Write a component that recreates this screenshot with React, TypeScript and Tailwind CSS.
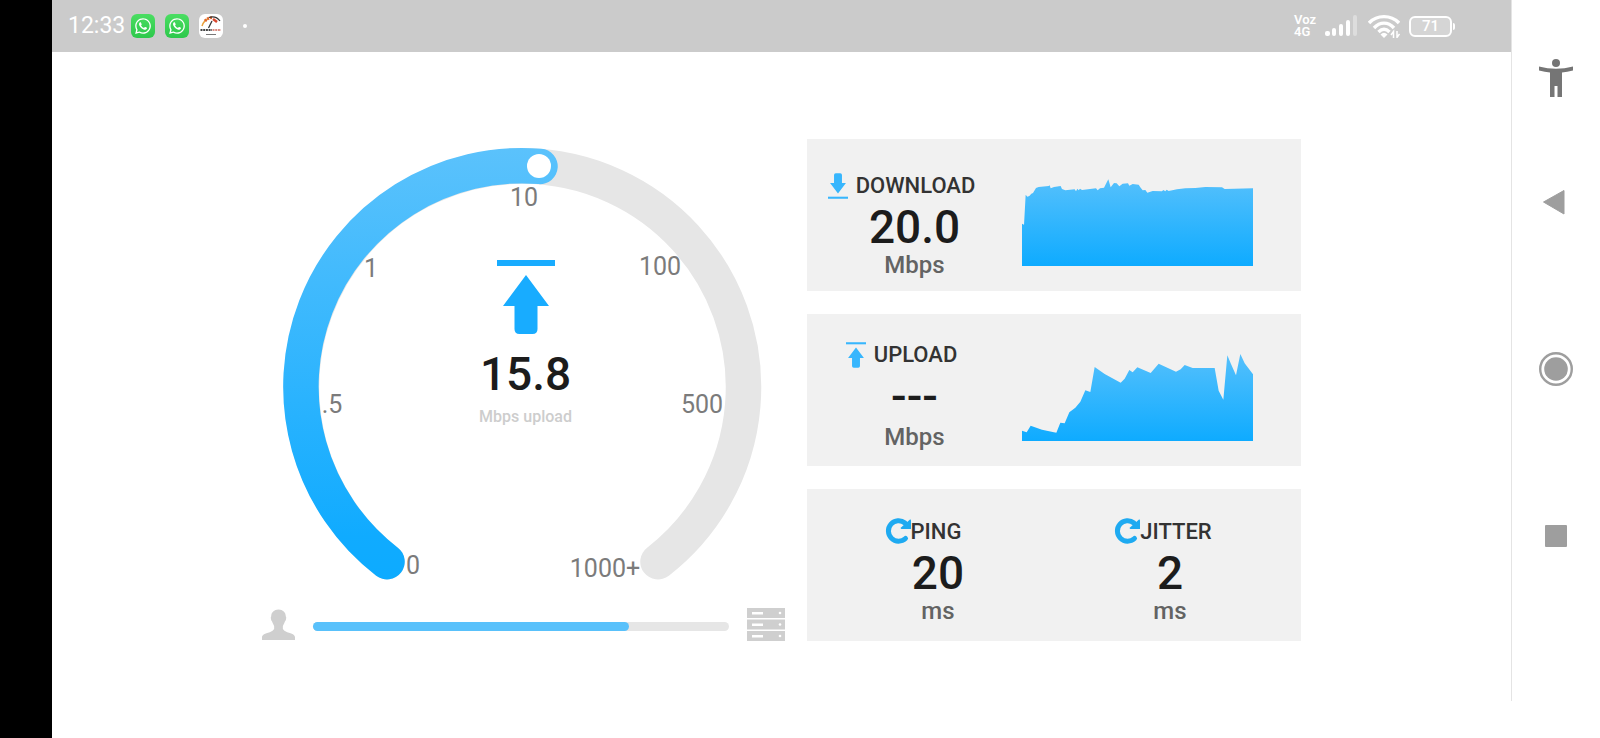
import type { ReactNode } from "react";
import { FaWhatsapp } from "react-icons/fa";

const DOWNLOAD_POINTS =
  "0,136 3,134 6,139 11,47 16,53 22,51 28,44 33,42 42,27 50,24 80,21 83,19 86,28 96,24 116,21 120,30 130,34 158,31 162,37 166,29 170,34 174,29 180,33 222,28 227,34 234,28 246,26 252,14 259,1 266,25 276,12 284,13 292,22 302,14 318,13 322,20 332,15 350,17 356,26 362,34 370,33 376,41 392,36 420,37 424,33 430,37 434,32 440,36 465,31 490,28 520,27 550,24 600,25 608,30 693,28";

const UPLOAD_POINTS =
  "0,230 14,235 26,215 60,227 103,236 115,206 128,208 142,175 160,161 175,143 190,109 205,114 218,39 248,60 296,86 308,74 322,48 332,55 346,40 386,57 410,29 462,53 476,46 488,33 512,42 578,42 590,110 604,137 616,4 626,28 642,64 655,0 668,28 693,61";

const TICKS = [
  { label: "0", x: 151, y: 435 },
  { label: ".5", x: 70, y: 274 },
  { label: "1", x: 109, y: 138 },
  { label: "10", x: 262, y: 67 },
  { label: "100", x: 398, y: 136 },
  { label: "500", x: 440, y: 274 },
  { label: "1000+", x: 343, y: 438 },
];

function SignalIcon() {
  return (
    <svg viewBox="0 0 34 22" className="h-[22px] w-[34px]" fill="#fff">
      <rect x="0" y="16" width="5" height="5" rx="2" />
      <rect x="7" y="13" width="4" height="8" rx="2" />
      <rect x="14" y="9" width="4" height="12" rx="2" />
      <rect x="21" y="5" width="4" height="16" rx="2" />
      <rect x="28" y="0" width="4" height="21" rx="2" opacity="0.35" />
    </svg>
  );
}

function WifiIcon() {
  return (
    <svg viewBox="0 0 32 24" className="h-6 w-8" fill="none" stroke="#fff" strokeWidth="3.400">
      <path d="M1 9 C9 0.500 23 0.500 31 9" />
      <path d="M6 14 C12 7.500 20 7.500 26 14" />
      <path d="M10.500 18 C14 14.500 18 14.500 21.500 18" />
      <path d="M12.500 20.500 Q16 17 19.500 20.500 L16 24 Z" fill="#fff" stroke="none" />
      <path d="M25.500 24 V17.500 L23 21 M29 17 V23.500 L31.500 20" strokeWidth="1.500" />
    </svg>
  );
}

function SpeedtestBadge() {
  return (
    <svg viewBox="0 0 24 24" className="size-6">
      <rect width="24" height="24" rx="6" fill="#fff" />
      <path d="M3 12 Q5 6 10 4.500" fill="none" stroke="#e9a13b" strokeWidth="1.500" />
      <path d="M6 7 Q9 3.500 14 3.500" fill="none" stroke="#e0662e" strokeWidth="3" strokeDasharray="2 1" />
      <path d="M10 3.500 Q17 1.500 21 7" fill="none" stroke="#333" strokeWidth="1.200" />
      <path d="M14 5 L18 8" stroke="#d9482f" strokeWidth="2.500" />
      <path d="M9.500 14 L13 7" stroke="#333" strokeWidth="1.200" />
      <path d="M1.500 16 H13" stroke="#444" strokeWidth="2" strokeDasharray="2 0.700" />
      <path d="M13.500 16 H22" stroke="#d98b80" strokeWidth="2" strokeDasharray="2 0.700" />
      <path d="M7 20.500 H17" stroke="#777" strokeWidth="1" />
    </svg>
  );
}

function StatusBar() {
  return (
    <header className="flex h-13 items-center justify-between bg-[#cbcbcb] pr-[56px] pl-4 text-white">
      <div className="flex items-center">
        <span className="mr-[6px] text-[23px]">12:33</span>
        <div className="flex items-center gap-[10px]">
          {["a", "b"].map((k) => (
            <span key={k} className="flex size-6 items-center justify-center rounded-md bg-linear-to-b from-[#4ade62] to-[#2cc84b]">
              <FaWhatsapp size={18} />
            </span>
          ))}
          <SpeedtestBadge />
        </div>
        <span className="ml-5 size-1 rounded-full bg-white" />
      </div>
      <div className="flex items-center gap-[9px]">
        <div className="text-[13px] leading-3 font-semibold">
          <div>Voz</div>
          <div>4G</div>
        </div>
        <SignalIcon />
        <WifiIcon />
        <div className="flex items-center gap-px">
          <span className="flex h-[21px] w-[43px] items-center justify-center rounded-md border-2 border-white bg-white/20 text-[15px] font-medium">
            71
          </span>
          <span className="h-[7px] w-[2px] rounded-r bg-white" />
        </div>
      </div>
    </header>
  );
}

function ArrowIcon({ dir, className, fill }: { dir: "up" | "down"; className: string; fill: string }) {
  return (
    <svg viewBox="0 0 58 74" className={className} fill={fill}>
      <g transform={dir === "down" ? "matrix(1 0 0 -1 0 74)" : undefined}>
        <rect width="58" height="6" />
        <path d="M29 15 L52 46 H40.500 V69 Q40.500 74 35.500 74 H22.500 Q17.500 74 17.500 69 V46 H6 Z" />
      </g>
    </svg>
  );
}

function RefreshIcon() {
  return (
    <svg viewBox="0 0 26 26" className="size-[26px] overflow-visible">
      <path d="M20.500 19.500 A10.200 10.200 0 1 1 20 4" fill="none" stroke="#1eaaf1" strokeWidth="5" strokeLinecap="round" />
      <path d="M25 0.500 Q26 0 26 1.500 V10 H16.500 Q15 9.500 16 8.500 Z" fill="#1eaaf1" />
    </svg>
  );
}

function Gauge() {
  return (
    <div className="grid">
      <svg viewBox="0 0 523 446" className="col-start-1 row-start-1 w-full">
        <defs>
          <linearGradient id="arc" gradientUnits="userSpaceOnUse" x1="0" y1="9" x2="0" y2="440">
            <stop offset="0" stopColor="#5bc2fc" />
            <stop offset="0.900" stopColor="#10abff" />
            <stop offset="1" stopColor="#0dabff" />
          </linearGradient>
        </defs>
        <g fill="none" strokeWidth="35.500" strokeLinecap="round">
          <path d="M125 422.700 A221 221 0 1 1 396 422.700" stroke="#e6e6e6" />
          <path d="M125 422.700 A221 221 0 0 1 278 27.400" stroke="url(#arc)" />
        </g>
        <circle cx="277" cy="27" r="12" fill="#fff" />
        <g fill="#7b7b7b" fontSize="25" textAnchor="middle">
          {TICKS.map((t) => (
            <text key={t.label} x={t.x} y={t.y}>
              {t.label}
            </text>
          ))}
        </g>
      </svg>
      <div className="col-start-1 row-start-1 flex flex-col items-center pt-[121px] pl-1">
        <ArrowIcon dir="up" className="h-[74px] w-[58px]" fill="#18acff" />
        <strong className="mt-4 text-[46px] leading-[48px] font-medium text-[#1c1c1c]">15.8</strong>
        <span className="mt-[7px] text-[16px] leading-6 font-medium text-[#cdcdcd]">Mbps upload</span>
      </div>
    </div>
  );
}

function TransferProgress({ value }: { value: number }) {
  return (
    <div className="flex items-center gap-[18px]">
      <svg viewBox="0 0 34 32" className="h-8 w-[33px]" fill="#cfcfcf">
        <path d="M17 0 C21.500 0 24.500 3 24.500 7 Q25.500 8 24.500 11 Q23.500 12 23 14 Q22 16 21.500 17 V20 Q22.500 22 26 23.500 C31 25 34 26 34 29 V31.500 H0 V29 C0 26 3 25 8 23.500 Q11.500 22 12.500 20 V17 Q12 16 11 14 Q10.500 12 9.500 11 Q8.500 8 9.500 7 C9.500 3 12.500 0 17 0 Z" />
      </svg>
      <div
        role="progressbar"
        aria-label="Upload progress"
        aria-valuenow={value}
        className="mt-1 h-[9px] flex-1 rounded-full bg-[#e6e6e6]"
      >
        <div className="h-full rounded-full bg-[#59c1fb]" style={{ width: `${value}%` }} />
      </div>
      <svg viewBox="0 0 38 33" className="h-[33px] w-[38px]">
        {[0, 11.5, 23].map((y) => (
          <g key={y}>
            <rect y={y} width="38" height="10" fill="#cfcfcf" />
            <rect x="5" y={y + 4} width="11" height="2.500" fill="#fff" />
            <circle cx="33" cy={y + 5} r="1.300" fill="#fff" />
          </g>
        ))}
      </svg>
    </div>
  );
}

function AreaChart({ id, points }: { id: string; points: string }) {
  return (
    <svg viewBox="0 0 693 261" className="h-[87px] w-[231px] shrink-0">
      <defs>
        <linearGradient id={id} x1="0" y1="0" x2="0" y2="1">
          <stop offset="0" stopColor="#55c0fc" />
          <stop offset="1" stopColor="#0eabff" />
        </linearGradient>
      </defs>
      <polygon points={`${points} 693,261 0,261`} fill={`url(#${id})`} />
    </svg>
  );
}

function Card({ children }: { children: ReactNode }) {
  return <section className="flex h-[152px] items-start bg-[#f1f1f1]">{children}</section>;
}

function Title({ icon, children }: { icon: ReactNode; children: ReactNode }) {
  return (
    <h2 className="flex items-center text-[22px] leading-[26px] font-medium text-[#333]">
      {icon}
      {children}
    </h2>
  );
}

function Value({ children }: { children: ReactNode }) {
  return <strong className="mt-1 text-[46px] leading-[48px] font-medium text-[#1c1c1c]">{children}</strong>;
}

function Unit({ children }: { children: ReactNode }) {
  return <span className="text-[24px] leading-7 font-medium text-[#636363]">{children}</span>;
}

function NavButton({ label, children }: { label: string; children: ReactNode }) {
  return (
    <button type="button" aria-label={label} className="flex size-12 items-center justify-center">
      {children}
    </button>
  );
}

function NavRail() {
  return (
    <nav className="mb-[37px] flex w-[89px] shrink-0 flex-col items-center border-l border-[#e4e4e4] pt-[54px]">
      <NavButton label="Accessibility">
        <svg viewBox="0 0 34 38" className="h-[38px] w-[34px]" fill="#757575">
          <circle cx="17" cy="4" r="4" />
          <path d="M0 7.500 Q17 12 34 7.500 L34 11.500 Q28 13 23 13.500 V38 H18.500 V27 H15.500 V38 H11 V13.500 Q6 13 0 11.500 Z" />
        </svg>
      </NavButton>
      <div className="mt-[76px] flex flex-col gap-[119px]">
        <NavButton label="Back">
          <svg viewBox="0 0 26 26" className="size-[26px]" fill="#9e9e9e" stroke="#9e9e9e" strokeLinejoin="round">
            <path d="M0.500 13 L21 1.500 V25 Z" />
          </svg>
        </NavButton>
        <NavButton label="Home">
          <svg viewBox="0 0 34 34" className="size-[34px]">
            <circle cx="17" cy="17" r="15.800" fill="none" stroke="#9e9e9e" strokeWidth="2.400" />
            <circle cx="17" cy="17" r="11.800" fill="#9e9e9e" />
          </svg>
        </NavButton>
        <NavButton label="Recent apps">
          <span className="size-[22px] rounded-[1px] bg-[#9e9e9e]" />
        </NavButton>
      </div>
    </nav>
  );
}

export default function App() {
  return (
    <div className="flex min-h-screen bg-white font-[Roboto,sans-serif]">
      <div className="w-13 shrink-0 bg-black" />
      <div className="min-w-0 flex-1">
        <StatusBar />
        <main className="mx-auto flex max-w-[1039px] gap-[22px] pt-[87px]">
          <div className="flex min-w-0 flex-1 flex-col justify-between">
            <Gauge />
            <TransferProgress value={76} />
          </div>
          <div className="flex w-[494px] shrink-0 flex-col gap-[23px]">
            <Card>
              <div className="flex w-[215px] flex-col items-center pt-[34px]">
                <div className="pr-[26px]">
                  <Title icon={<ArrowIcon dir="down" className="mr-2 h-[26px] w-5" fill="#37b6fd" />}>DOWNLOAD</Title>
                </div>
                <Value>20.0</Value>
                <Unit>Mbps</Unit>
              </div>
              <div className="pt-10">
                <AreaChart id="download" points={DOWNLOAD_POINTS} />
              </div>
            </Card>
            <Card>
              <div className="flex w-[215px] flex-col items-center pt-7">
                <div className="pr-[26px]">
                  <Title icon={<ArrowIcon dir="up" className="mr-2 h-[26px] w-5" fill="#37b6fd" />}>UPLOAD</Title>
                </div>
                <Value>---</Value>
                <div className="pt-[3px]">
                  <Unit>Mbps</Unit>
                </div>
              </div>
              <div className="pt-10">
                <AreaChart id="upload" points={UPLOAD_POINTS} />
              </div>
            </Card>
            <Card>
              <div className="flex w-[262px] flex-col items-center pt-[30px]">
                <div className="pr-[30px]">
                  <Title icon={<RefreshIcon />}>PING</Title>
                </div>
                <Value>20</Value>
                <Unit>ms</Unit>
              </div>
              <div className="flex w-[202px] flex-col items-center pt-[30px]">
                <div className="pr-[14px]">
                  <Title icon={<RefreshIcon />}>JITTER</Title>
                </div>
                <Value>2</Value>
                <Unit>ms</Unit>
              </div>
            </Card>
          </div>
        </main>
      </div>
      <NavRail />
    </div>
  );
}
